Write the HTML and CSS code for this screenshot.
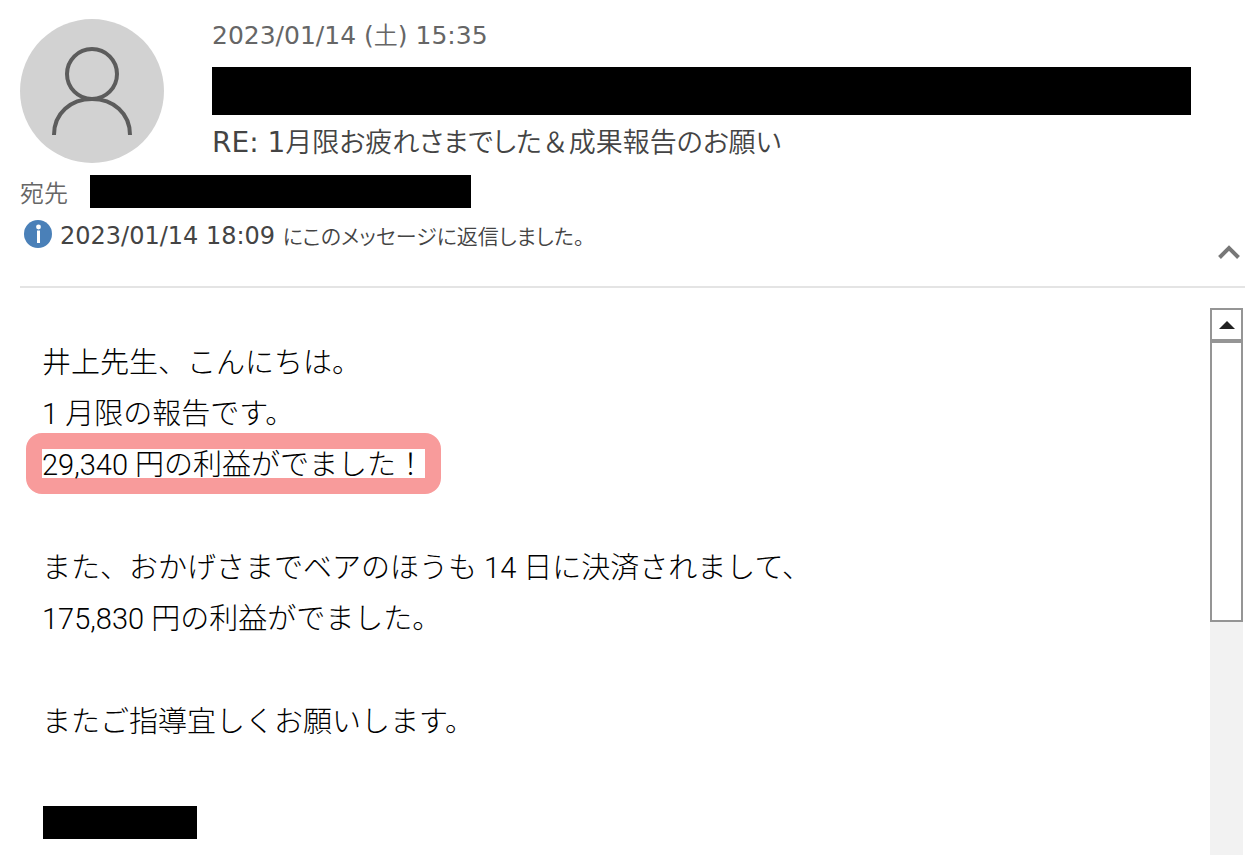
FILE: index.html
```html
<!DOCTYPE html>
<html lang="ja">
<head>
<meta charset="utf-8">
<meta name="viewport" content="width=device-width, initial-scale=1">
<title>RE: 1月限お疲れさまでした＆成果報告のお願い</title>
<link rel="stylesheet" href="styles.css">
</head>
<body>
<header class="head">
  <div class="sender">
    <svg class="avatar" viewBox="0 0 144 144" aria-hidden="true">
      <circle cx="72" cy="72" r="72" fill="#d2d2d2"/>
      <g fill="none" stroke="#5c5c5c" stroke-width="4">
        <circle cx="72" cy="55" r="25"/>
        <path d="M34 116C34 94 51 80 72 80s38 14 38 36"/>
      </g>
    </svg>
    <div class="summary">
      <time class="date" datetime="2023-01-14T15:35">2023/01/14 (<span class="day">土</span>) 15:35</time>
      <div class="redacted redacted-from"></div>
      <h1 class="subject">RE: 1<span class="subject-ja">月限お疲れさまでした<span class="full">＆</span>成果報告のお願い</span></h1>
    </div>
  </div>
  <div class="to">
    <span class="to-label">宛先</span>
    <div class="redacted redacted-to"></div>
  </div>
  <div class="notice">
    <svg class="info" viewBox="0 0 28 28" aria-hidden="true">
      <circle cx="14" cy="14" r="14" fill="#4a80b8"/>
      <circle cx="14.5" cy="7" r="2.4" fill="#fff"/>
      <path d="M13 10.500h3V23h-3z" fill="#fff"/>
    </svg>
    <p class="notice-text">2023/01/14 18:09 <span class="notice-ja">にこのメッセージに返信しました。</span></p>
    <button class="collapse" type="button" aria-label="折りたたむ">
      <svg class="chevron" viewBox="0 0 22 14" aria-hidden="true"><path d="M1.500 12.500L11 3l9.500 9.500" fill="none" stroke="#777" stroke-width="4"/></svg>
    </button>
  </div>
</header>
<main class="main">
  <article class="message">
    <p class="line">井上先生、こんにちは。</p>
    <p class="line">1 月限の報告です。</p>
    <p class="line"><mark class="profit">29,340 円の利益がでました！</mark></p>
    <p class="line gap">また、おかげさまでベアのほうも 14 日に決済されまして、</p>
    <p class="line">175,830 円の利益がでました。</p>
    <p class="line gap">またご指導宜しくお願いします。</p>
    <div class="redacted redacted-name"></div>
  </article>
  <div class="scrollbar">
    <button class="scroll-up" type="button" aria-label="上へスクロール">
      <svg class="arrow" viewBox="0 0 16 8" aria-hidden="true"><path d="M0 8L8 0l8 8z" fill="#222"/></svg>
    </button>
    <div class="thumb"></div>
  </div>
</main>
</body>
</html>
```
FILE: styles.css
```css
* { box-sizing: border-box; }

body {
  margin: 0;
  min-height: 100vh;
  display: flex;
  flex-direction: column;
  background: #fff;
  color: #444;
  font-family: "DejaVu Sans", "Noto Sans CJK JP", sans-serif;
}

p, h1 { margin: 0; }

.redacted { background: #000; }

.head {
  margin: 0 9px 0 20px;
  padding-top: 19px;
  border-bottom: 2px solid #e4e4e4;
}

.sender {
  display: flex;
  gap: 48px;
  padding-right: 54px;
}

.avatar { width: 144px; height: 144px; flex: none; }

.summary { flex: 1; min-width: 0; }

.date {
  display: block;
  height: 48px;
  font-size: 25px;
  line-height: 34px;
  color: #666;
}

.day, .subject-ja, .to-label, .notice-ja {
  font-family: "Noto Sans CJK JP", sans-serif;
  font-weight: 350;
}

.day { font-size: 24px; line-height: 24px; }

.redacted-from { height: 48px; }

.subject {
  height: 54px;
  font-size: 28px;
  line-height: 56px;
  font-weight: 400;
}

.subject-ja {
  font-size: 27px;
  line-height: 27px;
  font-feature-settings: "palt";
}

.full { font-feature-settings: normal; }

.to {
  display: flex;
  gap: 22px;
  margin-top: 6px;
}

.to-label {
  width: 48px;
  font-size: 24px;
  line-height: 33px;
  color: #666;
}

.redacted-to { width: 381px; height: 33px; }

.notice {
  display: flex;
  align-items: flex-start;
  height: 78px;
  padding: 12px 5px 0 4px;
}

.info { width: 28px; height: 28px; flex: none; }

.notice-text {
  flex: 1;
  padding-left: 8px;
  font-size: 24px;
  line-height: 33px;
}

.notice-ja {
  font-size: 21px;
  line-height: 21px;
  font-feature-settings: "palt";
}

.collapse {
  margin-top: 25px;
  padding: 0;
  border: 0;
  background: none;
}

.chevron { display: block; width: 22px; height: 14px; }

.main {
  flex: 1;
  display: flex;
  padding: 20px 11px 3px 42px;
}

.message {
  flex: 1;
  padding-top: 30px;
  color: #000;
  font-family: Roboto, "Noto Sans CJK JP", sans-serif;
  font-size: 29px;
  font-weight: 300;
}

.line { line-height: 51px; }

.gap { margin-top: 52px; }

.profit {
  display: inline-block;
  margin: -16px;
  padding-top: 4px;
  border: 16px solid #f89b9b;
  border-radius: 16px;
  background: #fff;
  color: inherit;
  line-height: 25px;
}

.redacted-name { width: 154px; height: 33px; margin: 58px 0 0 1px; }

.scrollbar {
  width: 33px;
  display: flex;
  flex-direction: column;
  background: #f2f2f2;
}

.scroll-up {
  display: flex;
  align-items: center;
  justify-content: center;
  height: 33px;
  padding: 0;
  border: 2px solid #959595;
  background: #fff;
}

.arrow { width: 16px; height: 8px; }

.thumb {
  height: 281px;
  border: 2px solid #959595;
  background: #fff;
}
```
